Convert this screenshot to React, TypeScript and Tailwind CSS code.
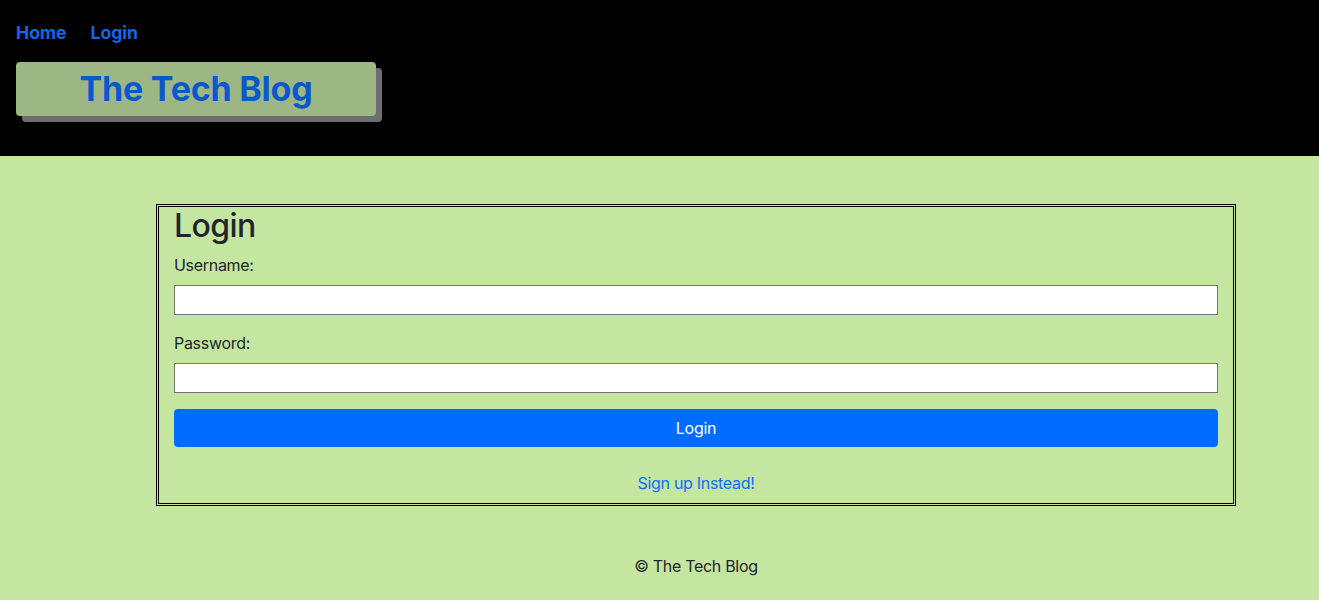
import React from "react";

export default function App() {
  const font = { fontFamily: "Inter, 'Liberation Sans', sans-serif" };
  return (
    <div className="min-h-[600px] bg-[#c4e6a1] text-[#212529]" style={font}>
      <header className="h-[156px] bg-black px-4 pt-[21px]">
        <nav className="flex gap-6 text-[17.6px] font-bold leading-6 text-[#1166ee]">
          <a href="#">Home</a>
          <a href="#">Login</a>
        </nav>
        <div className="mt-[17px] flex h-[54px] w-[360px] items-center justify-center rounded-[4px] bg-[#9cb783] shadow-[6px_6px_0_#6e6e6e]">
          <h1 className="text-[34px] font-bold leading-none tracking-[-0.2px] text-[#0a58ca]">The Tech Blog</h1>
        </div>
      </header>
      <main className="ml-[156px] w-[1080px] pt-12 tracking-[-0.3px]">
        <div className="border-[3px] border-double border-black px-[15px] pb-2">
          <h2 className="mb-2 text-[32px] font-medium leading-[38px] tracking-[-0.6px]">Login</h2>
          <form className="flex flex-col">
            <label className="mb-2 text-base leading-6">Username:</label>
            <input className="mb-4 h-[30px] border border-[#767676] bg-white" />
            <label className="mb-2 text-base leading-6">Password:</label>
            <input type="password" className="mb-4 h-[30px] border border-[#767676] bg-white" />
            <button type="button" className="h-[38px] rounded-[4px] bg-[#006cff] text-base text-white">Login</button>
          </form>
          <div className="mt-6 text-center leading-6">
            <a href="#" className="text-[#0d6efd]">Sign up Instead!</a>
          </div>
        </div>
        <footer className="mt-12 text-center leading-6">© The Tech Blog</footer>
      </main>
    </div>
  );
}
